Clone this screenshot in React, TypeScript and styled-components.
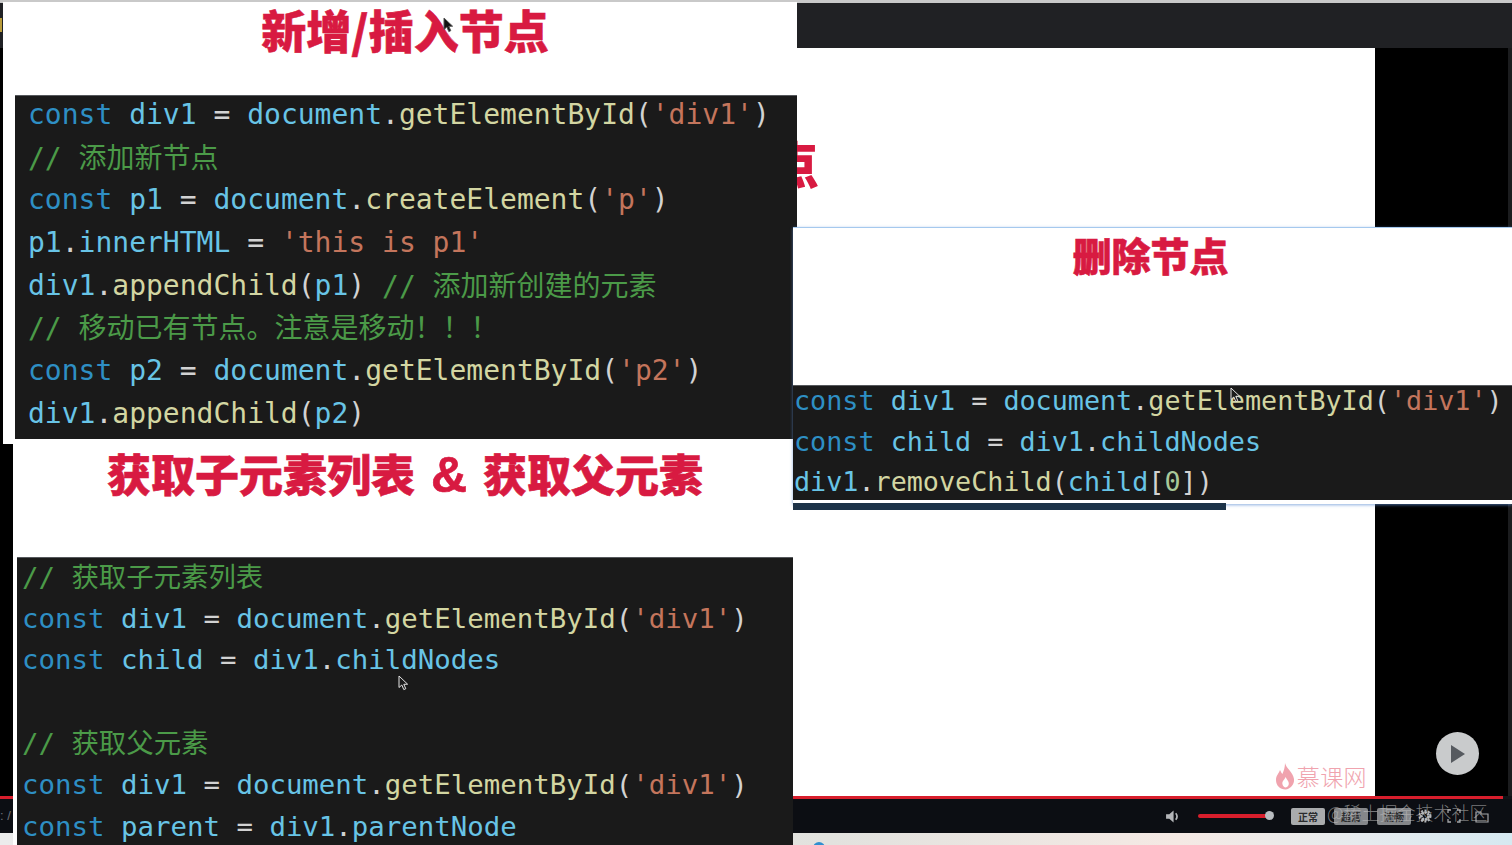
import React from 'react';
import styled, { createGlobalStyle } from 'styled-components';

const Global = createGlobalStyle`
  html, body { margin: 0; padding: 0; background: #000; overflow: hidden; }
  * { box-sizing: border-box; }
`;

const Desktop = styled.div`
  position: relative; width: 1512px; height: 845px; overflow: hidden; background: #000;
  display: flex; flex-direction: column;
  font-family: "Noto Sans CJK SC", "Noto Sans", sans-serif;
`;
const TopEdge = styled.div`height: 3px; background: #c9c9c9; flex: none;`;
const TopBar = styled.div`height: 45px; background: #202124; flex: none;`;
const Stage = styled.div`height: 748px; display: flex; flex: none; position: relative;`;
const Gutter = styled.div`width: 13px; background: #000;`;
const StageWhite = styled.div`flex: 1; background: #fff; position: relative; overflow: hidden;`;
const StageBlack = styled.div`width: 133px; background: #000; position: relative;`;
const StageEdge = styled.div`width: 4px; background: #1b1c1e;`;
const Progress = styled.div`height: 3px; flex: none; background: #101216; display: flex;`;
const ProgressFill = styled.div`width: 1503px; background: #d81e2c;`;
const Controls = styled.div`
  height: 34px; flex: none; background: #0c0e13; display: flex; align-items: center;
  padding-left: 1165px; position: relative;
`;
const Speaker = styled.svg`width: 15px; height: 15px; margin-right: 18px; flex: none;`;
const VolumeTrack = styled.div`width: 71px; height: 4px; border-radius: 2px; background: #d81e2c; position: relative; margin-right: 22px; flex: none;`;
const VolumeKnob = styled.div`
  position: absolute; right: -5px; top: -3px; width: 9px; height: 9px; border-radius: 50%; background: #b9bcc0;
`;
const Quality = styled.div<{ $dim?: boolean }>`
  width: 34px; height: 17px; border-radius: 2px; margin-right: 9px; flex: none;
  background: ${p => (p.$dim ? '#85878a' : '#a9abad')}; color: #2a2b2d;
  font-size: 10px; font-weight: 700; line-height: 17px; text-align: center;
`;
const CtrlIcon = styled.svg<{ $gap: number }>`width: 14px; height: 14px; margin-left: ${p => p.$gap}px; flex: none;`;
const Watermark = styled.div`
  position: absolute; left: 1327px; top: -1px; font-size: 18px; line-height: 28px; white-space: nowrap;
  color: rgba(190, 190, 190, 0.62); font-family: "Noto Sans CJK SC", sans-serif; font-weight: 300;
`;
const BottomStrip = styled.div`
  flex: 1; position: relative;
  background: linear-gradient(90deg, #ececec 0%, #e2e2de 55%, #f5e9e4 78%, #e6ebee 90%, #d6e9f1 100%);
`;
const TaskIcon = styled.div`
  position: absolute; left: 813px; top: 9px; width: 12px; height: 12px; border-radius: 50%; background: #2f8fd0;
`;

const Win = styled.div<{ $x: number; $y: number; $w: number; $h: number }>`
  position: absolute; left: ${p => p.$x}px; top: ${p => p.$y}px;
  width: ${p => p.$w}px; height: ${p => p.$h}px;
  background: #fff; display: flex; flex-direction: column; overflow: hidden;
`;
const BlueWin = styled(Win)`
  border-top: 1px solid #a5c9ee; box-shadow: 0 1px 3px rgba(90, 140, 210, 0.7);
  padding-bottom: 4px;
`;
const Title = styled.div<{ $size: number; $h: number; $pad: number; $shift?: number }>`
  flex: none; height: ${p => p.$h}px; padding-top: ${p => p.$pad}px;
  margin-left: ${p => p.$shift ?? 0}px;
  font-size: ${p => p.$size}px; line-height: 1.2; font-weight: 900; color: #d81a41;
  text-align: center; white-space: pre;
  font-family: "Liberation Sans", "Noto Sans CJK SC", sans-serif;
  -webkit-text-stroke: 0.6px #d81a41;
`;
const Amp = styled.span`font-size: 50px; word-spacing: 0; margin: 0 16px; line-height: 1;`;
const Slash = styled.span`font-family: "Noto Sans CJK SC", sans-serif; line-height: 1;`;
const Panel = styled.div<{ $left: number; $size: number; $lh: number; $pad: number; $shift: number }>`
  flex: 1; margin-left: ${p => p.$left}px; background: #1a1a1a; border-top: 1px solid #55585c;
  padding: 0 0 0 ${p => p.$pad}px;
  font-family: "DejaVu Sans Mono", "Noto Sans CJK SC", monospace;
  font-size: ${p => p.$size}px; line-height: ${p => p.$lh}px; white-space: pre; overflow: hidden;
  & > div:first-child { margin-top: ${p => p.$shift}px; }
`;
const Line = styled.div`height: 1lh;`;
const colors: Record<string, string> = {
  k: '#2e8fc4', v: '#68c4e6', f: '#d3d6a2', s: '#c4755c', c: '#4b9a48', p: '#d2d2d2', n: '#a9c99a',
};
const Tok = styled.span<{ $k: string }>`
  color: ${p => colors[p.$k]};
  position: ${p => (p.$k === 'c' ? 'relative' : 'static')};
  top: 1px;
`;

const Glimpse = styled.div`
  position: absolute; left: 756px; top: 84px; font-size: 50px; line-height: 60px; font-weight: 900;
  color: #d81a41; font-family: "Noto Sans CJK SC", sans-serif;
`;
const Play = styled.div`
  position: absolute; left: 61px; top: 684px; width: 43px; height: 43px; border-radius: 50%;
  background: #c9cbcc; display: flex; align-items: center; justify-content: center;
`;
const Logo = styled.div`
  position: absolute; right: 8px; bottom: 5px; display: flex; align-items: center; gap: 2px;
  color: #f0a3ae; font-size: 23px; line-height: 30px; font-weight: 300; letter-spacing: 0.4px;
`;
const Cursor = styled.svg<{ $x: number; $y: number }>`
  position: absolute; left: ${p => p.$x}px; top: ${p => p.$y}px; width: 11px; height: 16px; z-index: 5;
`;
const ScrollBar = styled.div`
  position: absolute; left: 793px; top: 503px; width: 433px; height: 7px; background: #1d3349;
`;
const Yellow = styled.div`position: absolute; left: 0; top: 18px; width: 2px; height: 14px; background: #b89b3a;`;
const LeftText = styled.div`
  position: absolute; left: 0; top: 808px; color: #6d7178; font-size: 13px; line-height: 16px;
  font-family: "Liberation Sans", sans-serif;
`;

type T = [string, string];
const D1 = (v: string): T[] => [['k', 'const'], ['p', ' '], ['v', v], ['p', ' = ']];
const getDiv: T[] = [...D1('div1'), ['v', 'document'], ['p', '.'], ['f', 'getElementById'], ['p', '('], ['s', "'div1'"], ['p', ')']];
const w1: T[][] = [
  getDiv,
  [['c', '// 添加新节点']],
  [...D1('p1'), ['v', 'document'], ['p', '.'], ['f', 'createElement'], ['p', '('], ['s', "'p'"], ['p', ')']],
  [['v', 'p1'], ['p', '.'], ['v', 'innerHTML'], ['p', ' = '], ['s', "'this is p1'"]],
  [['v', 'div1'], ['p', '.'], ['f', 'appendChild'], ['p', '('], ['v', 'p1'], ['p', ') '], ['c', '// 添加新创建的元素']],
  [['c', '// 移动已有节点。注意是移动！！！']],
  [...D1('p2'), ['v', 'document'], ['p', '.'], ['f', 'getElementById'], ['p', '('], ['s', "'p2'"], ['p', ')']],
  [['v', 'div1'], ['p', '.'], ['f', 'appendChild'], ['p', '('], ['v', 'p2'], ['p', ')']],
];
const w3: T[][] = [
  [['c', '// 获取子元素列表']],
  getDiv,
  [...D1('child'), ['v', 'div1'], ['p', '.'], ['v', 'childNodes']],
  [['p', ' ']],
  [['c', '// 获取父元素']],
  getDiv,
  [...D1('parent'), ['v', 'div1'], ['p', '.'], ['v', 'parentNode']],
];
const w4: T[][] = [
  getDiv,
  [...D1('child'), ['v', 'div1'], ['p', '.'], ['v', 'childNodes']],
  [['v', 'div1'], ['p', '.'], ['f', 'removeChild'], ['p', '('], ['v', 'child'], ['p', '['], ['n', '0'], ['p', '])']],
];

const Code = ({ lines }: { lines: T[][] }) => (
  <>
    {lines.map((l, i) => (
      <Line key={i}>
        {l.map(([k, t], j) => <Tok key={j} $k={k}>{t}</Tok>)}
      </Line>
    ))}
  </>
);

const Arrow = ({ x, y, dark }: { x: number; y: number; dark?: boolean }) => (
  <Cursor $x={x} $y={y} viewBox="0 0 11 16">
    <path d="M1 1 L1 12.5 L3.8 10 L5.8 14.6 L7.8 13.7 L5.8 9.3 L9.6 9.2 Z"
      fill={dark ? '#111' : '#1c1c1c'} stroke={dark ? '#555' : '#e4e4e4'} strokeWidth="1" />
  </Cursor>
);

export default function App() {
  return (
    <Desktop>
      <Global />
      <TopEdge />
      <TopBar />
      <Stage>
        <Gutter />
        <StageWhite>
          <Glimpse>点</Glimpse>
          <Logo>
            <svg width="20" height="30" viewBox="0 0 20 28">
              <path d="M10 1 C11 6 18 10 19 17 C19.6 23 15 27 10.5 27.6 C5 27.4 1 23.6 1 18 C1 13.6 3.8 11.5 5 8 C6 10 6.6 11 7.4 12 C8.8 9 10 5 10 1 Z M10.6 15 C9.4 18 7 19 7.4 22 C7.8 24.4 9.4 25.4 10.6 25.4 C12.6 25.2 14 23.4 13.8 21 C13.6 18.6 11.4 17.4 10.6 15 Z" fill="#f0a3ae" fillRule="evenodd" />
            </svg>
            <span>慕课网</span>
          </Logo>
        </StageWhite>
        <StageBlack>
          <Play>
            <svg width="18" height="20" viewBox="0 0 18 20"><path d="M2 1 L16 10 L2 19 Z" fill="#565a5f" /></svg>
          </Play>
        </StageBlack>
        <StageEdge />
      </Stage>
      <Progress><ProgressFill /></Progress>
      <Controls>
        <Speaker viewBox="0 0 14 14">
          <path d="M1 5 H4 L8 1.5 V12.5 L4 9 H1 Z" fill="#b4b6b9" />
          <path d="M10 4 Q12.5 7 10 10" stroke="#b4b6b9" strokeWidth="1.6" fill="none" />
        </Speaker>
        <VolumeTrack><VolumeKnob /></VolumeTrack>
        <Quality>正常</Quality>
        <Quality $dim>超清</Quality>
        <Quality $dim>流畅</Quality>
        <CtrlIcon $gap={-2} viewBox="0 0 14 14">
          <circle cx="7" cy="7" r="3.6" fill="none" stroke="#b4b6b9" strokeWidth="2.8" strokeDasharray="2.4 0.8" />
          <circle cx="7" cy="7" r="5.6" fill="none" stroke="#b4b6b9" strokeWidth="1.8" strokeDasharray="2 1.6" />
        </CtrlIcon>
        <CtrlIcon $gap={15} viewBox="0 0 14 14">
          <path d="M1 4 V1 H4 M10 1 H13 V4 M13 10 V13 H10 M4 13 H1 V10" fill="none" stroke="#a4a6a9" strokeWidth="1.3" />
        </CtrlIcon>
        <CtrlIcon $gap={14} viewBox="0 0 14 14">
          <path d="M1 3 H6 V5 H13 V13 H1 Z" fill="none" stroke="#a4a6a9" strokeWidth="1.2" />
        </CtrlIcon>
        <Watermark>@稀土掘金技术社区</Watermark>
      </Controls>
      <BottomStrip><TaskIcon /></BottomStrip>

      <Yellow />
      <LeftText>: /</LeftText>

      <Win $x={3} $y={2} $w={794} $h={442}>
        <Title $size={45} $h={93} $pad={5} $shift={10}>新增<Slash>/</Slash>插入节点</Title>
        <Panel $left={12} $size={28} $lh={42.7} $pad={13} $shift={-2}><Code lines={w1} /></Panel>
      </Win>

      <Win $x={13} $y={439} $w={780} $h={406}>
        <Title $size={44} $h={118} $pad={11} $shift={4}>获取子元素列表<Amp>&amp;</Amp>获取父元素</Title>
        <Panel $left={4} $size={27.4} $lh={41.6} $pad={5} $shift={-2}><Code lines={w3} /></Panel>
      </Win>

      <BlueWin $x={793} $y={227} $w={719} $h={277}>
        <Title $size={39} $h={157} $pad={7} $shift={-4}>删除节点</Title>
        <Panel $left={0} $size={26.75} $lh={40.6} $pad={1} $shift={-5}><Code lines={w4} /></Panel>
      </BlueWin>
      <ScrollBar />

      <Arrow x={443} y={17} dark />
      <Arrow x={398} y={675} />
      <Arrow x={1230} y={387} />
    </Desktop>
  );
}
